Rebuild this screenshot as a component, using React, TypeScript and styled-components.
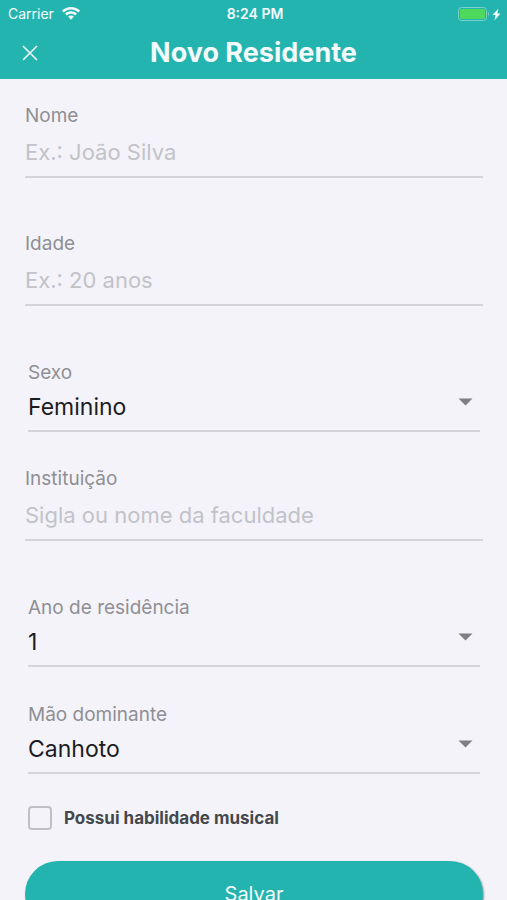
import React, { useState } from "react";
import styled, { createGlobalStyle } from "styled-components";

const GlobalStyle = createGlobalStyle`
  *, *::before, *::after { box-sizing: border-box; }
  html, body, #root { height: 100%; }
  body {
    margin: 0;
    background: #f4f3f9;
    font-family: Inter, "Liberation Sans", sans-serif;
    color: #1c1c1f;
  }
  input, select, button { font-family: inherit; }
`;

const Screen = styled.div`
  height: 100vh;
  display: flex;
  flex-direction: column;
  overflow: hidden;
`;

const TopArea = styled.div`
  flex: none;
  background: #24b4b0;
  color: #f4fbfd;
`;

const StatusBar = styled.div`
  display: grid;
  grid-template-columns: 1fr auto 1fr;
  align-items: center;
  height: 27px;
  padding: 0 5px 0 8px;
  font-size: 14px;
  line-height: 16px;
`;

const Carrier = styled.span`
  display: flex;
  align-items: center;
  gap: 8px;
`;

const Clock = styled.span`
  font-weight: 600;
`;

const Battery = styled.span`
  display: flex;
  justify-content: flex-end;
`;

const NavBar = styled.header`
  display: grid;
  grid-template-columns: 44px 1fr 44px;
  align-items: center;
  height: 52px;
  padding: 0 8px;
`;

const CloseButton = styled.button`
  display: flex;
  align-items: center;
  justify-content: center;
  height: 44px;
  padding: 0;
  border: 0;
  background: none;
  color: inherit;
`;

const Title = styled.h1`
  margin: 0;
  text-align: center;
  font-size: 27px;
  line-height: 32px;
  font-weight: 700;
`;

const Form = styled.form`
  flex: 1;
  min-height: 0;
  overflow: hidden;
  padding: 25px 24px 0 25px;
`;

const TextGroup = styled.div`
  padding-bottom: 54px;
`;

const PickGroup = styled.div<{ $gap: number }>`
  margin: 0 3px ${(p) => p.$gap}px;
  padding-top: 1px;
`;

const Label = styled.label`
  display: block;
  font-size: 19px;
  line-height: 24px;
  color: #8f8f94;
`;

const TextInput = styled.input`
  display: block;
  width: 100%;
  height: 50px;
  padding: 0;
  border: 0;
  border-bottom: 2px solid #d4d4da;
  border-radius: 0;
  outline: none;
  background: none;
  font-size: 22px;
  color: #1c1c1f;
  &::placeholder { color: #c2c2c9; opacity: 1; }
`;

const SelectBox = styled.div`
  display: grid;
  align-items: center;
  border-bottom: 2px solid #d4d4da;
`;

const Select = styled.select`
  grid-area: 1 / 1;
  appearance: none;
  width: 100%;
  height: 45px;
  padding: 0 28px 2px 0;
  border: 0;
  outline: none;
  background: none;
  font-size: 23px;
  color: #1c1c1f;
`;

const Arrow = styled.svg`
  grid-area: 1 / 1;
  justify-self: end;
  margin: 0 7px 12px 0;
  pointer-events: none;
`;

const CheckRow = styled.label`
  display: flex;
  align-items: center;
  gap: 12px;
  margin: 0 3px 31px;
  font-size: 17px;
  line-height: 24px;
  font-weight: 700;
  color: #43484d;
`;

const Checkbox = styled.input`
  appearance: none;
  width: 24px;
  height: 24px;
  margin: 0;
  border: 2px solid #bfbfc4;
  border-radius: 4px;
  &:checked { background: #24b4b0; border-color: #24b4b0; }
`;

const SaveButton = styled.button`
  display: block;
  width: 100%;
  height: 66px;
  border: 0;
  border-radius: 33px;
  background: #24b4b0;
  box-shadow: 1px 1px 2px rgba(0, 0, 0, 0.4);
  color: #f4fbfd;
  font-size: 20px;
  line-height: 24px;
`;

function TextField(props: { id: string; label: string; placeholder: string }) {
  return (
    <TextGroup>
      <Label htmlFor={props.id}>{props.label}</Label>
      <TextInput id={props.id} placeholder={props.placeholder} />
    </TextGroup>
  );
}

function PickField(props: { id: string; label: string; options: string[]; gap: number }) {
  return (
    <PickGroup $gap={props.gap}>
      <Label htmlFor={props.id}>{props.label}</Label>
      <SelectBox>
        <Select id={props.id} defaultValue={props.options[0]}>
          {props.options.map((o) => (
            <option key={o}>{o}</option>
          ))}
        </Select>
        <Arrow width="15" height="8" viewBox="0 0 15 8" aria-hidden="true">
          <path d="M0.5 0.5h14l-7 7z" fill="#7f7f83" />
        </Arrow>
      </SelectBox>
    </PickGroup>
  );
}

export default function App() {
  const [musical, setMusical] = useState(false);
  return (
    <>
      <GlobalStyle />
      <Screen>
        <TopArea>
          <StatusBar>
            <Carrier>
              Carrier
              <svg width="18" height="13" viewBox="0 0 18 13" fill="currentColor" aria-hidden="true">
                <path d="M9 0C5.600 0 2.400 1.300 0 3.600l1.700 1.800C3.700 3.500 6.200 2.500 9 2.500s5.300 1 7.300 2.900L18 3.600C15.600 1.300 12.400 0 9 0z" />
                <path d="M9 4.300c-2.200 0-4.300.8-5.900 2.300l1.700 1.800C6 7.300 7.400 6.700 9 6.700s3 .6 4.200 1.700l1.700-1.800C13.300 5.100 11.200 4.300 9 4.300z" />
                <path d="M9 8.400c-1.100 0-2.100.4-2.900 1.200L9 12.700l2.900-3.100C11.100 8.800 10.100 8.400 9 8.400z" />
              </svg>
            </Carrier>
            <Clock>8:24 PM</Clock>
            <Battery>
              <svg width="45" height="14" viewBox="0 0 45 14" aria-label="Bateria carregando">
                <rect x="1.500" y="0.500" width="28" height="13" rx="3" fill="none" stroke="#7dcfcc" />
                <rect x="3" y="2" width="25" height="10" rx="1.500" fill="#4cd95c" />
                <path d="M31 4.800c1.300.4 1.300 4 0 4.400z" fill="#7dcfcc" />
                <path d="M41.500 1.500L35.500 8h3l-1 5.500L43.500 6.500H40.300z" fill="#f4fbfd" />
              </svg>
            </Battery>
          </StatusBar>
          <NavBar>
            <CloseButton type="button" aria-label="Fechar">
              <svg width="16" height="16" viewBox="0 0 16 16" fill="none" stroke="currentColor" strokeWidth="1.500" aria-hidden="true">
                <path d="M1 1l14 14M15 1l-14 14" />
              </svg>
            </CloseButton>
            <Title>Novo Residente</Title>
          </NavBar>
        </TopArea>
        <Form onSubmit={(e) => e.preventDefault()}>
          <TextField id="nome" label="Nome" placeholder="Ex.: João Silva" />
          <TextField id="idade" label="Idade" placeholder="Ex.: 20 anos" />
          <PickField id="sexo" label="Sexo" options={["Feminino", "Masculino"]} gap={35} />
          <TextField id="instituicao" label="Instituição" placeholder="Sigla ou nome da faculdade" />
          <PickField id="ano" label="Ano de residência" options={["1", "2", "3"]} gap={35} />
          <PickField id="mao" label="Mão dominante" options={["Canhoto", "Destro"]} gap={32} />
          <CheckRow>
            <Checkbox type="checkbox" checked={musical} onChange={(e) => setMusical(e.target.checked)} />
            Possui habilidade musical
          </CheckRow>
          <SaveButton type="submit">Salvar</SaveButton>
        </Form>
      </Screen>
    </>
  );
}
